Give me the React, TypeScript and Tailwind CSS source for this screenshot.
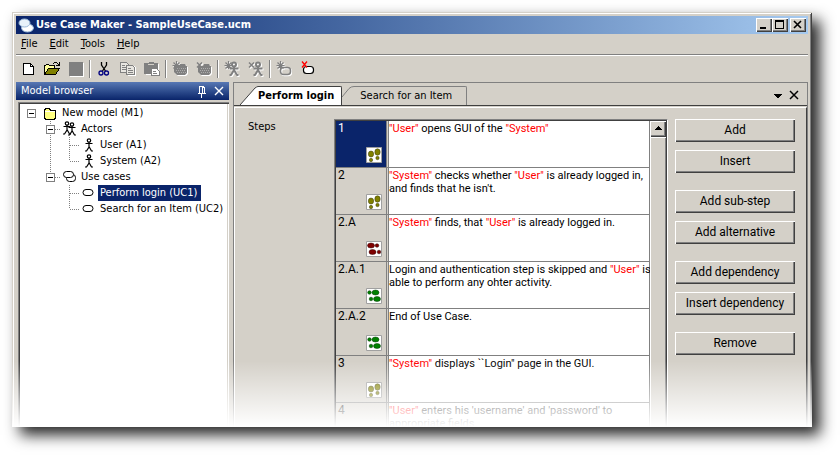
import React from "react";

const raised =
  "bg-[#d4d0c8] shadow-[inset_1px_1px_0_#fff,inset_-1px_-1px_0_#404040,inset_-2px_-2px_0_#808080]";

type Art = { children: React.ReactNode; w?: number; h?: number; crisp?: boolean };

function Svg({ children, w = 16, h = 16, crisp = true }: Art) {
  return (
    <svg
      width={w}
      height={h}
      viewBox={`0 0 ${w} ${h}`}
      fill="none"
      shapeRendering={crisp ? "crispEdges" : "auto"}
      className="block shrink-0"
      aria-hidden="true"
    >
      {children}
    </svg>
  );
}

/* Draws a disabled glyph: grey with a white copy one pixel below and right. */
function Embossed({ children }: { children: React.ReactNode }) {
  return (
    <Svg crisp={false}>
      <g transform="translate(1 1)" color="#fff">{children}</g>
      <g color="#808080">{children}</g>
    </Svg>
  );
}

const spark = (
  <path d="M4.500 0v8M.5 4.500h8M1.500 1.500l6 6M7.500 1.500l-6 6" stroke="currentColor" strokeWidth="1.200" />
);
const smallCross = <path d="M1 1.500l5 5M6 1.500l-5 5" stroke="currentColor" strokeWidth="1.500" />;
const grayFolder = (
  <>
    <path d="M2 5h5l1-2h5l1 2h1v7l-2 2H5l-3-3z" fill="currentColor" />
    <path d="M5 7.500h9M4 9.500h10M5 11.500h9" stroke="#fff" strokeOpacity=".35" strokeDasharray="1 1" />
  </>
);
const grayPerson = (
  <g stroke="currentColor" strokeWidth="2">
    <circle cx="10" cy="3.500" r="2" />
    <path d="M5.500 7.500h9M10 6v4M10 9l-3 5M10 9l3 5M5.500 14h2M12.500 14h2" />
  </g>
);

function NewIcon() {
  return (
    <Svg>
      <path d="M3.500 2.500h7l3 3v8h-10z" fill="#fff" stroke="#000" />
      <path d="M10.500 2.500v3h3" stroke="#000" />
    </Svg>
  );
}

function OpenIcon() {
  return (
    <Svg>
      <path d="M.5 13V4.500h1l1-1h2l1 1h5v3" fill="#ffff9c" stroke="#000" />
      <path d="M.5 13.500l4-6h11l-4 6z" fill="#808000" stroke="#000" />
      <path d="M9 2.500h1M10 1.500h3M13 2.500h1M14 3.500h1M15.500 1v4M12 4.500h3" stroke="#000" />
    </Svg>
  );
}

function SaveIcon() {
  return (
    <Svg>
      <path d="M2 2h14v14H2z" fill="#fff" />
      <path d="M1 1h14v14H1z" fill="#808080" />
    </Svg>
  );
}

function CutIcon() {
  return (
    <Svg crisp={false}>
      <path d="M5.500 1v3l4 6M10.500 1v3l-4 6" stroke="#000" strokeWidth="1.300" />
      <circle cx="5" cy="12" r="2" stroke="#000080" strokeWidth="1.300" />
      <circle cx="10.500" cy="12" r="2" stroke="#000080" strokeWidth="1.300" />
    </Svg>
  );
}

function CopyIcon() {
  return (
    <Svg>
      <path d="M.5 1.500h6l2 2v8h-8z" fill="#e8e6e1" stroke="#808080" />
      <path d="M2 4.500h3M2 6.500h4M2 8.500h4" stroke="#808080" />
      <path d="M8 5h6l2 2v8H8z" fill="#fff" />
      <path d="M6.500 4.500h6l2 2v7h-8z" fill="#e8e6e1" stroke="#808080" />
      <path d="M8 7.500h3M8 9.500h5M8 11.500h5" stroke="#808080" />
    </Svg>
  );
}

function PasteIcon() {
  return (
    <Svg>
      <path d="M2 3h13v11H2z" fill="#fff" />
      <path d="M0 2h4l1-1h4l1 1h4v11H0z" fill="#808080" />
      <path d="M4 3h6v1H4z" fill="#d4d0c8" />
      <path d="M7.500 7.500h5l3 3v4h-8z" fill="#fff" stroke="#808080" />
      <path d="M9 10.500h3M9 12.500h4" stroke="#808080" />
    </Svg>
  );
}

function RemoveUseCaseIcon() {
  return (
    <Svg crisp={false}>
      <rect x="3.500" y="5.500" width="10" height="7" rx="3" fill="#fff" stroke="#000" strokeWidth="1.200" />
      <path d="M2 .5l5 6M7 .5l-5 6" stroke="#ff0000" strokeWidth="1.300" />
    </Svg>
  );
}

function FolderIcon() {
  return (
    <Svg>
      <path d="M1.500 5v-1h1v-1h4v1h1v1h5v8h-1v1h-9v-1h-1z" fill="#ffff80" stroke="#000" />
      <path d="M2 6.500h10" stroke="#fff" />
    </Svg>
  );
}

function Person() {
  return (
    <>
      <circle cx="8" cy="3.500" r="1.700" fill="#fff" stroke="#000" />
      <path d="M4.500 6.500h7M8 5v5l-2.500 4H4M8 9.500l2.500 4.500H12" stroke="#000" />
    </>
  );
}

function PersonIcon() {
  return (
    <Svg crisp={false}>
      <g strokeWidth="1.200"><Person /></g>
    </Svg>
  );
}

function ActorsIcon() {
  return (
    <Svg crisp={false}>
      <g transform="translate(-3 -1)" strokeWidth="1.200"><Person /></g>
      <g transform="translate(2 0)" strokeWidth="1.200"><Person /></g>
    </Svg>
  );
}

function UseCasesIcon() {
  return (
    <Svg crisp={false}>
      <rect x="4.500" y="5.500" width="9" height="7" rx="3" fill="#fff" stroke="#000" />
      <rect x="1.500" y="2.500" width="10" height="6" rx="3" fill="#fff" stroke="#000" />
    </Svg>
  );
}

function UseCaseIcon() {
  return (
    <Svg crisp={false}>
      <rect x="2" y="4.500" width="10" height="6" rx="3" fill="#fff" stroke="#000" />
    </Svg>
  );
}

function Footprints({ kind }: { kind: "main" | "alternative" | "sub" }) {
  return (
    <Svg crisp={false}>
      <path d="M.5 .5h15v15H.5z" fill="#fff" stroke="#a0a0a0" />
      {kind === "main" && (
        <g fill="#808000" stroke="#3c3c10" strokeWidth=".5">
          <ellipse cx="5" cy="7" rx="2.700" ry="3" />
          <ellipse cx="11.500" cy="5" rx="2.700" ry="3.200" />
          <circle cx="5" cy="13" r="1.700" />
          <circle cx="11.500" cy="11" r="1.700" />
        </g>
      )}
      {kind === "alternative" && (
        <g fill="#800000" stroke="#300000" strokeWidth=".5">
          <ellipse cx="5" cy="4.500" rx="3.500" ry="2.500" />
          <circle cx="11" cy="4.500" r="1.800" />
          <ellipse cx="6.500" cy="11" rx="3.500" ry="2.500" />
          <circle cx="13" cy="11" r="1.800" />
        </g>
      )}
      {kind === "sub" && (
        <g fill="#008000" stroke="#003800" strokeWidth=".5">
          <ellipse cx="9.500" cy="4.500" rx="3.500" ry="2.500" />
          <circle cx="3.500" cy="4.500" r="1.800" />
          <ellipse cx="11" cy="11" rx="3.500" ry="2.500" />
          <circle cx="5" cy="11" r="1.800" />
        </g>
      )}
    </Svg>
  );
}

const menus = ["File", "Edit", "Tools", "Help"];

const tools = [
  [
    { name: "New", icon: <NewIcon /> },
    { name: "Open", icon: <OpenIcon /> },
    { name: "Save", icon: <SaveIcon /> },
  ],
  [
    { name: "Cut", icon: <CutIcon /> },
    { name: "Copy", icon: <CopyIcon /> },
    { name: "Paste", icon: <PasteIcon /> },
  ],
  [
    { name: "Add package", icon: <Embossed>{grayFolder}{spark}</Embossed> },
    { name: "Remove package", icon: <Embossed>{grayFolder}{smallCross}</Embossed> },
  ],
  [
    { name: "Add actor", icon: <Embossed>{grayPerson}{spark}</Embossed> },
    { name: "Remove actor", icon: <Embossed>{grayPerson}{smallCross}</Embossed> },
  ],
  [
    {
      name: "Add use case",
      icon: (
        <Embossed>
          {spark}
          <rect x="4.500" y="6.500" width="10" height="7" rx="3" stroke="currentColor" strokeWidth="1.500" />
        </Embossed>
      ),
    },
    { name: "Remove use case", icon: <RemoveUseCaseIcon /> },
  ],
];

type Cell = "blank" | "box" | "rootbox" | "lastbox" | "line" | "tee" | "corner";

function Guide({ kind }: { kind: Cell }) {
  const dots = { stroke: "#808080", strokeDasharray: "1 1" };
  const box = kind === "box" || kind === "rootbox" || kind === "lastbox";
  return (
    <Svg w={19} h={16}>
      {kind !== "blank" && kind !== "rootbox" && (
        <path d={kind === "corner" || kind === "lastbox" ? "M9.500 0v8" : "M9.500 0v16"} {...dots} />
      )}
      {(kind === "tee" || kind === "corner" || kind === "box" || kind === "lastbox") && (
        <path d="M10 8.500h9" {...dots} />
      )}
      {box && (
        <>
          <path d="M5.500 4.500h8v8h-8z" fill="#fff" stroke="#808080" />
          <path d="M7 8.500h5" stroke="#000" />
        </>
      )}
    </Svg>
  );
}

const tree: { label: string; guides: Cell[]; icon: React.ReactNode; selected?: boolean }[] = [
  { label: "New model (M1)", guides: ["rootbox"], icon: <FolderIcon /> },
  { label: "Actors", guides: ["blank", "box"], icon: <ActorsIcon /> },
  { label: "User (A1)", guides: ["blank", "line", "tee"], icon: <PersonIcon /> },
  { label: "System (A2)", guides: ["blank", "line", "corner"], icon: <PersonIcon /> },
  { label: "Use cases", guides: ["blank", "lastbox"], icon: <UseCasesIcon /> },
  { label: "Perform login (UC1)", guides: ["blank", "blank", "tee"], icon: <UseCaseIcon />, selected: true },
  { label: "Search for an Item (UC2)", guides: ["blank", "blank", "corner"], icon: <UseCaseIcon /> },
];

function Ref({ children }: { children: React.ReactNode }) {
  return <span className="text-[#ff0000]">&quot;{children}&quot;</span>;
}

const steps: { id: string; kind: "main" | "alternative" | "sub"; text: React.ReactNode }[] = [
  { id: "1", kind: "main", text: <><Ref>User</Ref> opens GUI of the <Ref>System</Ref></> },
  {
    id: "2",
    kind: "main",
    text: <><Ref>System</Ref> checks whether <Ref>User</Ref> is already logged in,<br />and finds that he isn't.</>,
  },
  { id: "2.A", kind: "alternative", text: <><Ref>System</Ref> finds, that <Ref>User</Ref> is already logged in.</> },
  {
    id: "2.A.1",
    kind: "sub",
    text: <>Login and authentication step is skipped and <Ref>User</Ref> is<br />able to perform any ohter activity.</>,
  },
  { id: "2.A.2", kind: "sub", text: "End of Use Case." },
  { id: "3", kind: "main", text: <><Ref>System</Ref> displays ``Login" page in the GUI.</> },
  {
    id: "4",
    kind: "main",
    text: <><Ref>User</Ref> enters his 'username' and 'password' to<br />appropriate fields.</>,
  },
];

const actionGroups = [
  ["Add", "Insert"],
  ["Add sub-step", "Add alternative"],
  ["Add dependency", "Insert dependency"],
  ["Remove"],
];

function TitleBar() {
  return (
    <header className="flex h-[18px] shrink-0 items-center bg-linear-to-r from-[#0a246a] to-[#a6caf0] px-[2px]">
      <Svg crisp={false}>
        <ellipse cx="9.500" cy="11" rx="6" ry="4" fill="#fff" stroke="#9ab8d8" />
        <ellipse cx="6.500" cy="6" rx="5.500" ry="4" fill="#e8f2fa" stroke="#9ab8d8" />
      </Svg>
      <h1 className="ml-[2px] flex-1 font-bold whitespace-nowrap text-white">
        Use Case Maker - SampleUseCase.ucm
      </h1>
      <div className="flex">
        <button aria-label="Minimize" className={`h-[14px] w-4 ${raised}`}>
          <Svg h={14}><path d="M4 9h6v2H4z" fill="#000" /></Svg>
        </button>
        <button aria-label="Maximize" className={`h-[14px] w-4 ${raised}`}>
          <Svg h={14}><path d="M3.500 3v7.500h8V3M3 3h9" stroke="#000" /><path d="M3 2h9v2H3z" fill="#000" /></Svg>
        </button>
        <button aria-label="Close" className={`ml-[2px] h-[14px] w-4 ${raised}`}>
          <Svg h={14} crisp={false}><path d="M4 3l7 7M11 3l-7 7" stroke="#000" strokeWidth="1.600" /></Svg>
        </button>
      </div>
    </header>
  );
}

function ModelBrowser() {
  return (
    <aside className="flex w-[213px] shrink-0 flex-col">
      <div className="flex h-[18px] shrink-0 items-center bg-linear-to-b from-[#5878b4] to-[#0a246a] pr-[2px] pl-[5px] text-white">
        <h2 className="flex-1">Model browser</h2>
        <button aria-label="Pin">
          <Svg><path d="M5.500 4v6M5 3.500h5M8 4h2v6H8zM4 10.500h8M7.500 11v4" stroke="#fff" /></Svg>
        </button>
        <button aria-label="Close panel" className="ml-px">
          <Svg crisp={false}><path d="M4 4l8 8M12 4l-8 8" stroke="#fff" strokeWidth="1.400" /></Svg>
        </button>
      </div>
      <ul className="mt-[2px] ml-[2px] flex-1 bg-white pt-[3px] pr-px pl-1 shadow-[inset_1px_1px_0_#808080,inset_2px_2px_0_#404040,inset_-1px_0_0_#fff,inset_-2px_0_0_#d4d0c8]">
        {tree.map((node) => (
          <li key={node.label} className="flex h-4 items-center">
            {node.guides.map((kind, i) => (
              <Guide key={i} kind={kind} />
            ))}
            <span className="flex w-[19px] justify-center">{node.icon}</span>
            <button
              className={`h-4 pl-[2px] text-left leading-4 whitespace-nowrap ${
                node.selected ? "bg-[#0a246a] pr-1 text-white" : ""
              }`}
            >
              {node.label}
            </button>
          </li>
        ))}
      </ul>
    </aside>
  );
}

function Tabs() {
  return (
    <div className="flex h-[23px] shrink-0 items-end border-b border-[#404040] pl-[6px]" role="tablist">
      <button role="tab" aria-selected="true" className="flex h-[19px] font-bold whitespace-nowrap">
        <Svg w={18} h={19} crisp={false}>
          <path d="M0 19L15 2q2-2 3-2v19z" fill="#fff" />
          <path d="M0 19L15 2q2-1.500 3-1.500" stroke="#404040" />
        </Svg>
        <span className="h-[19px] rounded-tr-[2px] border-t border-r border-[#404040] bg-white pr-[7px] leading-[17px]">
          Perform login
        </span>
      </button>
      <button role="tab" aria-selected="false" className="flex h-[19px] whitespace-nowrap">
        <Svg w={12} h={19} crisp={false}>
          <path d="M0 11L7 2.500q2-2 5-2" stroke="#808080" />
        </Svg>
        <span className="h-[19px] rounded-tr-[2px] border-t border-r border-[#808080] pr-[14px] pl-[6px] leading-[17px]">
          Search for an Item
        </span>
      </button>
      <div className="ml-auto flex pr-[5px] pb-[2px]">
        <button aria-label="Tab list">
          <Svg><path d="M4 7h8v1h-1v1h-1v1H9v1H7v-1H6V9H5V8H4z" fill="#000" /></Svg>
        </button>
        <button aria-label="Close tab">
          <Svg crisp={false}><path d="M4 4l8 8M12 4l-8 8" stroke="#000" strokeWidth="1.500" /></Svg>
        </button>
      </div>
    </div>
  );
}

function StepsEditor() {
  return (
    <div className="flex min-h-0 flex-1 items-start overflow-hidden pt-[11px] pr-[11px] pl-[13px] font-[Roboto,'Liberation_Sans',Arial,sans-serif] text-[12px] leading-[13px]">
      <div id="steps-label" className="w-[86px] shrink-0 pt-px font-['DejaVu_Sans_Condensed','DejaVu_Sans',sans-serif] text-[11px]">
        Steps
      </div>
      <div className="flex min-w-0 flex-1 border-t border-r border-l border-t-[#808080] border-r-white border-l-[#808080]">
        <div className="flex min-w-0 flex-1 border-t border-r border-l border-[#404040]">
          <div className="min-w-0 flex-1">
            <table aria-labelledby="steps-label" className="w-full table-fixed border-separate border-spacing-0">
              <tbody>
                {steps.map((step, i) => (
                  <tr key={step.id} className="h-[47px]">
                    <th
                      scope="row"
                      className={`h-[47px] w-[52px] border-b border-[#808080] p-0 pr-px text-left align-top font-normal ${
                        i === 0 ? "text-white" : ""
                      }`}
                    >
                      <div
                        className={`flex h-[46px] flex-col justify-between border-r border-[#808080] pt-px pr-1 pb-1 pl-[2px] ${
                          i === 0 ? "bg-[#0a246a]" : ""
                        }`}
                      >
                        <span>{step.id}</span>
                        <span className="self-end">
                          <Footprints kind={step.kind} />
                        </span>
                      </div>
                    </th>
                    <td className="border-r border-b border-l border-[#808080] bg-white p-0 pt-px align-top text-[11px] whitespace-nowrap">
                      {step.text}
                    </td>
                  </tr>
                ))}
              </tbody>
            </table>
          </div>
          <div className="flex w-4 shrink-0 flex-col">
            <button aria-label="Scroll up" className={`h-4 w-4 ${raised}`}>
              <Svg><path d="M8 5h1v1h1v1h1v1h1v1H5V8h1V7h1V6h1z" fill="#000" /></Svg>
            </button>
            <div className="flex-1 shadow-[inset_1px_1px_0_#fff,inset_-1px_0_0_#808080]" />
          </div>
        </div>
      </div>
      <div className="ml-[7px] flex w-[120px] shrink-0 flex-col gap-[17px]">
        {actionGroups.map((group) => (
          <div key={group[0]} className="flex flex-col gap-2">
            {group.map((action) => (
              <button key={action} className={`h-[23px] w-full ${raised}`}>
                {action}
              </button>
            ))}
          </div>
        ))}
      </div>
    </div>
  );
}

export default function App() {
  return (
    <div className="flex h-screen flex-col overflow-hidden bg-white pt-3 pr-7 pb-7 pl-3">
      <main className="relative flex min-h-0 flex-1 flex-col overflow-hidden bg-[#d4d0c8] px-1 pt-1 font-['DejaVu_Sans_Condensed','DejaVu_Sans',sans-serif] text-[11px] leading-4 text-black shadow-[8px_8px_14px_rgba(0,0,0,0.85)]">
        <TitleBar />
        <nav className="flex h-5 shrink-0 items-center gap-3 pl-[5px]">
          {menus.map((menu) => (
            <button key={menu}>
              <span className="underline">{menu[0]}</span>
              {menu.slice(1)}
            </button>
          ))}
        </nav>
        <div className="flex h-7 shrink-0 border-t border-[#808080] shadow-[inset_0_1px_0_#fff]" role="toolbar">
          {tools.map((group, i) => (
            <div key={i} className="flex items-center">
              {i > 0 && <div className="mx-px h-[18px] w-[2px] border-r border-l border-r-white border-l-[#808080]" />}
              {group.map((tool) => (
                <button key={tool.name} aria-label={tool.name} className="flex h-6 w-6 items-center justify-center">
                  {tool.icon}
                </button>
              ))}
            </div>
          ))}
        </div>
        <div className="flex min-h-0 flex-1 gap-1">
          <ModelBrowser />
          <section className="flex min-w-0 flex-1 flex-col border-t border-r border-l border-[#808080]">
            <Tabs />
            <div className="mt-px flex min-h-0 flex-1 flex-col border-t border-r border-l border-t-white border-r-[#404040] border-l-white">
              <StepsEditor />
            </div>
          </section>
        </div>
        {/* window frame */}
        <div className="pointer-events-none absolute inset-0 shadow-[inset_1px_1px_0_#d4d0c8,inset_-1px_0_0_#404040,inset_2px_2px_0_#fff,inset_-2px_0_0_#808080]" />
        {/* fade towards the bottom edge */}
        <div className="pointer-events-none absolute inset-x-0 bottom-0 h-[66px] bg-linear-to-b from-transparent to-white" />
      </main>
    </div>
  );
}
